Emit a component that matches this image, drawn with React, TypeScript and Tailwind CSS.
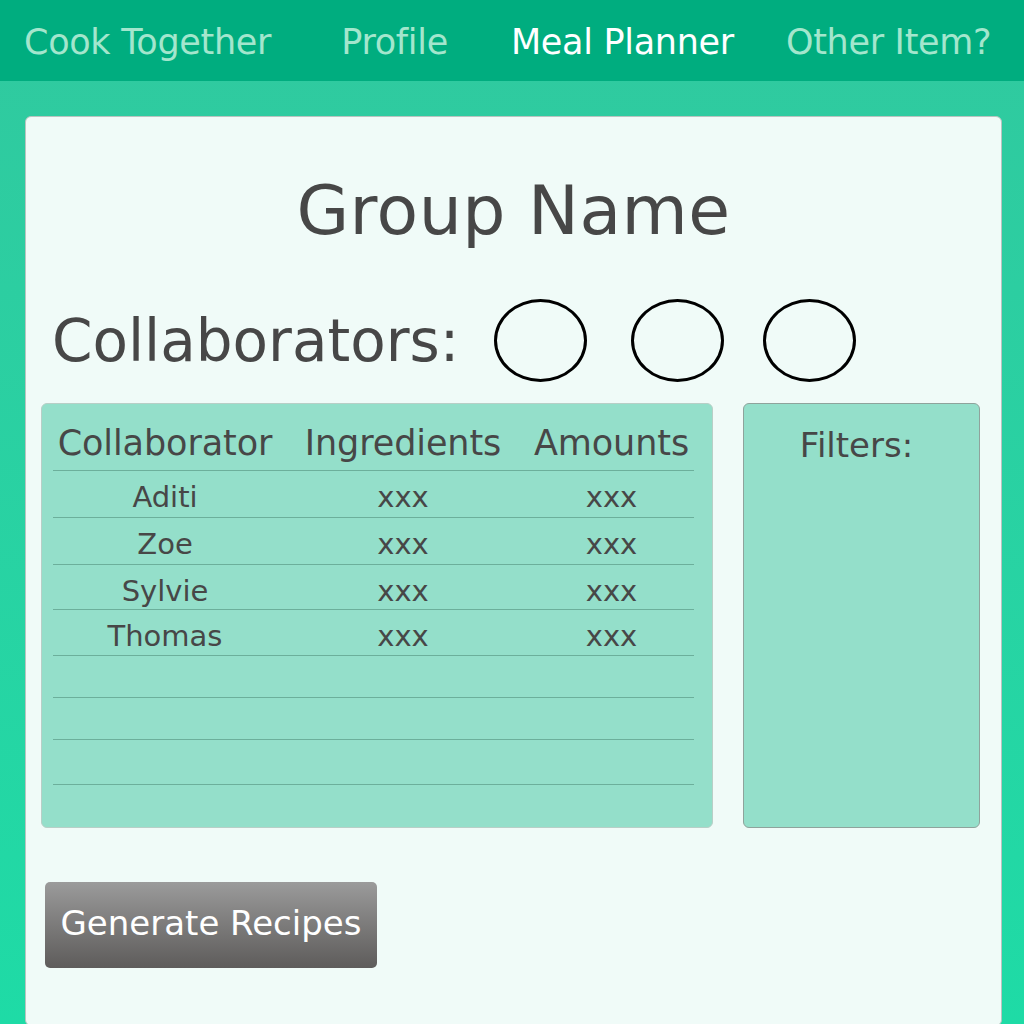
const navItems = [
  { label: 'Cook Together', active: false, spacing: 'ml-0' },
  { label: 'Profile', active: false, spacing: 'ml-[70px]' },
  { label: 'Meal Planner', active: true, spacing: 'ml-[63px]' },
  { label: 'Other Item?', active: false, spacing: 'ml-[52px]' },
];

const rows = [
  { name: 'Aditi', ingredients: 'xxx', amounts: 'xxx' },
  { name: 'Zoe', ingredients: 'xxx', amounts: 'xxx' },
  { name: 'Sylvie', ingredients: 'xxx', amounts: 'xxx' },
  { name: 'Thomas', ingredients: 'xxx', amounts: 'xxx' },
  { name: '', ingredients: '', amounts: '' },
  { name: '', ingredients: '', amounts: '' },
  { name: '', ingredients: '', amounts: '' },
];

const rowHeights = ['h-[47px]', 'h-[47px]', 'h-[45px]', 'h-[46px]', 'h-[42px]', 'h-[42px]', 'h-[45px]'];

const App = () => {
  return (
    <div
      className="w-[1024px] h-[1024px] flex flex-col overflow-hidden bg-gradient-to-b from-[#30c99f] to-[#1edba6] text-[#474747]"
      style={{ fontFamily: '"DejaVu Sans", sans-serif' }}
    >
      <nav className="h-[81px] shrink-0 bg-[#00ad7f] flex items-center pl-6 pt-1">
        {navItems.map((item) => (
          <span
            key={item.label}
            className={`text-[35px] leading-none tracking-[-0.3px] ${item.spacing} ${
              item.active ? 'text-white' : 'text-[#a3e6cd]'
            }`}
          >
            {item.label}
          </span>
        ))}
      </nav>

      <main className="flex-1 pt-[35px] pl-[25px] pr-[22px]">
        <div className="h-[910px] bg-[#f0fbf8] border border-[#b9c4c0] rounded-md flex flex-col">
          <h1 className="text-center text-[68px] leading-none mt-[60px] tracking-[0.5px]">Group Name</h1>

          <div className="flex items-center mt-[54px] pl-[26px]">
            <span className="text-[58px] leading-none">Collaborators:</span>
            <div className="flex items-center ml-[35px] gap-[44px]">
              <div className="w-[93px] h-[83px] rounded-[50%] border-[3px] border-black" />
              <div className="w-[93px] h-[83px] rounded-[50%] border-[3px] border-black" />
              <div className="w-[93px] h-[83px] rounded-[50%] border-[3px] border-black ml-[-5px]" />
            </div>
          </div>

          <div className="flex mt-[21px] pl-[15px] gap-[30px]">
            <div className="w-[672px] h-[425px] bg-[#94dfca] border border-[#b8cfc7] rounded-md pl-[11px] pr-[18px]">
              <div className="grid grid-cols-[224px_252px_165px] h-[67px] items-center border-b border-[#6caf9b] text-[35px] tracking-[-0.1px] pt-[12px]">
                <span className="text-center">Collaborator</span>
                <span className="text-center">Ingredients</span>
                <span className="text-center">Amounts</span>
              </div>
              {rows.map((row, i) => (
                <div
                  key={i}
                  className={`grid grid-cols-[224px_252px_165px] items-center border-b border-[#6caf9b] text-[29px] pt-[5px] ${rowHeights[i]}`}
                >
                  <span className="text-center">{row.name}</span>
                  <span className="text-center">{row.ingredients}</span>
                  <span className="text-center">{row.amounts}</span>
                </div>
              ))}
            </div>

            <div className="w-[237px] h-[425px] bg-[#94dfca] border border-[#8fa39c] rounded-md flex justify-center pt-[24px] pr-[10px]">
              <span className="text-[34px] leading-none">Filters:</span>
            </div>
          </div>

          <div className="pl-[19px] mt-[54px]">
            <button className="w-[332px] h-[86px] rounded-[5px] bg-gradient-to-b from-[#9b9b9b] to-[#5e5c5b] text-white text-[34px] flex items-center justify-center pb-1">
              Generate Recipes
            </button>
          </div>
        </div>
      </main>
    </div>
  );
};

export default App;
